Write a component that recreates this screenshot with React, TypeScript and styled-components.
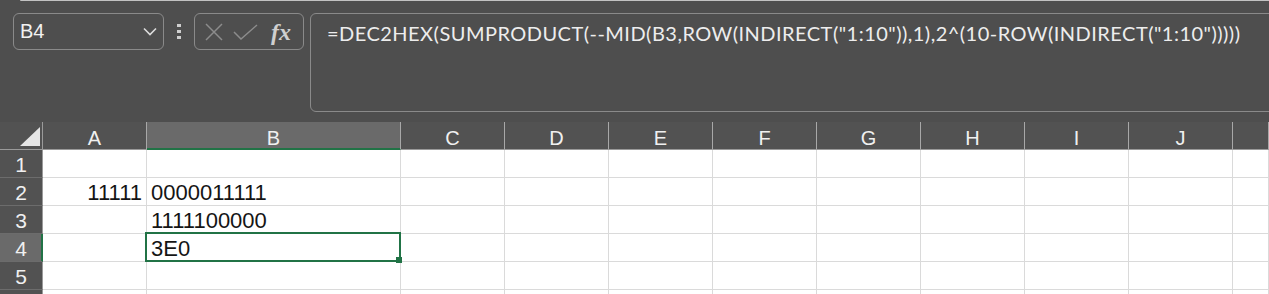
import React from "react"
import styled, { createGlobalStyle } from "styled-components"

const GREEN = "#217346"

const GlobalStyle = createGlobalStyle`
  html, body {
    margin: 0;
    padding: 0;
    background: #4e4e4e;
    overflow: hidden;
  }
  body {
    font-family: "Liberation Sans", Arial, sans-serif;
  }
`

const Window = styled.div`
  width: 1269px;
  height: 294px;
  overflow: hidden;
  background: #4e4e4e;
`

const TopEdge = styled.div`
  height: 1px;
  margin-left: 20px;
  background: #c2c2c2;
  border-top-left-radius: 3px;
`

const FormulaRow = styled.div`
  display: flex;
  align-items: flex-start;
  height: 121px;
  padding: 12px 0 0 13px;
  box-sizing: border-box;
`

const NameBox = styled.div`
  display: flex;
  align-items: center;
  justify-content: space-between;
  width: 151px;
  height: 37px;
  padding: 0 6px 0 6px;
  box-sizing: border-box;
  border: 1px solid #8a8a8a;
  border-radius: 6px;
  color: #f2f2f2;
  font-size: 20px;
`

const Dots = styled.div`
  display: flex;
  flex-direction: column;
  align-items: center;
  justify-content: center;
  gap: 2.5px;
  width: 30px;
  height: 37px;

  span {
    width: 4px;
    height: 3.5px;
    background: #cfcfcf;
  }
`

const ButtonBox = styled.div`
  display: flex;
  align-items: center;
  width: 110px;
  height: 37px;
  padding: 0 0 0 9px;
  box-sizing: border-box;
  border: 1px solid #8a8a8a;
  border-radius: 6px;
  margin-right: 6px;
`

const IconSlot = styled.div<{ $w: number }>`
  display: flex;
  align-items: center;
  justify-content: center;
  width: ${({ $w }) => $w}px;
  height: 24px;
`

const Fx = styled.span`
  font-family: "Liberation Serif", "Times New Roman", serif;
  font-style: italic;
  font-weight: bold;
  font-size: 24px;
  color: #cfcfcf;
  line-height: 1;
`

const FormulaBox = styled.div`
  flex: 1;
  height: 99px;
  margin-right: -12px;
  padding: 7px 16px;
  box-sizing: border-box;
  border: 1px solid #8a8a8a;
  border-radius: 6px;
  color: #ededed;
  font-family: Lato, "Liberation Sans", sans-serif;
  font-size: 20px;
  letter-spacing: 0.47px;
  line-height: 24px;
  white-space: nowrap;
`

const Sheet = styled.div`
  display: grid;
  grid-template-columns: 43px 104px 254px repeat(8, 104px) 1fr;
  grid-auto-rows: 28px;
`

const Corner = styled.div`
  position: relative;
  background: #525252;
  border-right: 1px solid #9a9a9a;
  border-bottom: 1px solid #9a9a9a;
  box-sizing: border-box;

  &::after {
    content: "";
    position: absolute;
    right: 2px;
    bottom: 3px;
    border-left: 20px solid transparent;
    border-bottom: 19px solid #e6e6e6;
  }
`

const ColHeader = styled.div<{ $selected?: boolean }>`
  display: flex;
  align-items: center;
  justify-content: center;
  padding-top: 5px;
  box-sizing: border-box;
  background: ${({ $selected }) => ($selected ? "#6a6a6a" : "#525252")};
  border-right: 1px solid #a8a8a8;
  border-bottom: 1px solid ${({ $selected }) => ($selected ? GREEN : "#9a9a9a")};
  box-shadow: ${({ $selected }) => ($selected ? `inset 0 -1px 0 ${GREEN}` : "none")};
  color: #f0f0f0;
  font-size: 20px;
`

const RowHeader = styled.div<{ $selected?: boolean }>`
  display: flex;
  align-items: center;
  justify-content: center;
  padding-top: 3px;
  box-sizing: border-box;
  background: ${({ $selected }) => ($selected ? "#6a6a6a" : "#525252")};
  border-right: 1px solid ${({ $selected }) => ($selected ? GREEN : "#9a9a9a")};
  border-bottom: 1px solid #6c6c6c;
  box-shadow: ${({ $selected }) => ($selected ? `inset -1px 0 0 ${GREEN}` : "none")};
  color: #f0f0f0;
  font-size: 21px;
`

const Cell = styled.div<{ $align?: "left" | "right"; $active?: boolean }>`
  position: relative;
  display: flex;
  align-items: flex-end;
  justify-content: ${({ $align }) => ($align === "right" ? "flex-end" : "flex-start")};
  padding: 0 4px 1px 4px;
  box-sizing: border-box;
  background: #fff;
  border-right: 1px solid #dadada;
  border-bottom: 1px solid #dadada;
  color: #151515;
  font-size: 22px;
  line-height: 22px;
  white-space: nowrap;
  z-index: ${({ $active }) => ($active ? 2 : 0)};

  ${({ $active }) =>
    $active &&
    `
    &::before {
      content: "";
      position: absolute;
      left: -2px;
      top: -2px;
      right: -1px;
      bottom: -1px;
      border: 2px solid ${GREEN};
      pointer-events: none;
    }
    &::after {
      content: "";
      position: absolute;
      right: -2px;
      bottom: -2px;
      width: 6px;
      height: 6px;
      background: ${GREEN};
    }
  `}
`

const columns = ["A", "B", "C", "D", "E", "F", "G", "H", "I", "J", ""]

type CellValue = { text: string; align?: "left" | "right" }

const data: Record<string, CellValue> = {
  A2: { text: "11111", align: "right" },
  B2: { text: "0000011111" },
  B3: { text: "1111100000" },
  B4: { text: "3E0" },
}

const activeCol = "B"
const activeRow = 4
// row 6 only peeks in at the bottom edge, its number is below the fold
const lastVisibleLabel = 5

const formula =
  '=DEC2HEX(SUMPRODUCT(--MID(B3,ROW(INDIRECT("1:10")),1),2^(10-ROW(INDIRECT("1:10")))))'

const Chevron = () => (
  <svg width="14" height="9" viewBox="0 0 14 9">
    <path d="M1 1.5 L7 7.5 L13 1.5" fill="none" stroke="#dcdcdc" strokeWidth="1.6" />
  </svg>
)

const CancelIcon = () => (
  <svg width="18" height="18" viewBox="0 0 18 18">
    <path d="M1 1 L17 17 M17 1 L1 17" stroke="#8c8c8c" strokeWidth="1.5" />
  </svg>
)

const EnterIcon = () => (
  <svg width="25" height="16" viewBox="0 0 25 16">
    <path d="M1 8 L8 15 L24 1" fill="none" stroke="#8c8c8c" strokeWidth="1.5" />
  </svg>
)

const App: React.FC = () => {
  const rows = [1, 2, 3, 4, 5, 6]
  return (
    <Window>
      <GlobalStyle />
      <TopEdge />
      <FormulaRow>
        <NameBox>
          <span>B4</span>
          <Chevron />
        </NameBox>
        <Dots>
          <span />
          <span />
          <span />
        </Dots>
        <ButtonBox>
          <IconSlot $w={20}>
            <CancelIcon />
          </IconSlot>
          <IconSlot $w={42}>
            <EnterIcon />
          </IconSlot>
          <IconSlot $w={30}>
            <Fx>fx</Fx>
          </IconSlot>
        </ButtonBox>
        <FormulaBox>{formula}</FormulaBox>
      </FormulaRow>
      <Sheet>
        <Corner />
        {columns.map((c, i) => (
          <ColHeader key={`h${i}`} $selected={c === activeCol}>
            {c}
          </ColHeader>
        ))}
        {rows.map((r) => (
          <React.Fragment key={r}>
            <RowHeader $selected={r === activeRow}>
              {r <= lastVisibleLabel ? r : null}
            </RowHeader>
            {columns.map((c, i) => {
              const v = data[`${c}${r}`]
              return (
                <Cell
                  key={`${r}-${i}`}
                  $align={v?.align}
                  $active={c === activeCol && r === activeRow}
                >
                  {v?.text}
                </Cell>
              )
            })}
          </React.Fragment>
        ))}
      </Sheet>
    </Window>
  )
}

export default App
